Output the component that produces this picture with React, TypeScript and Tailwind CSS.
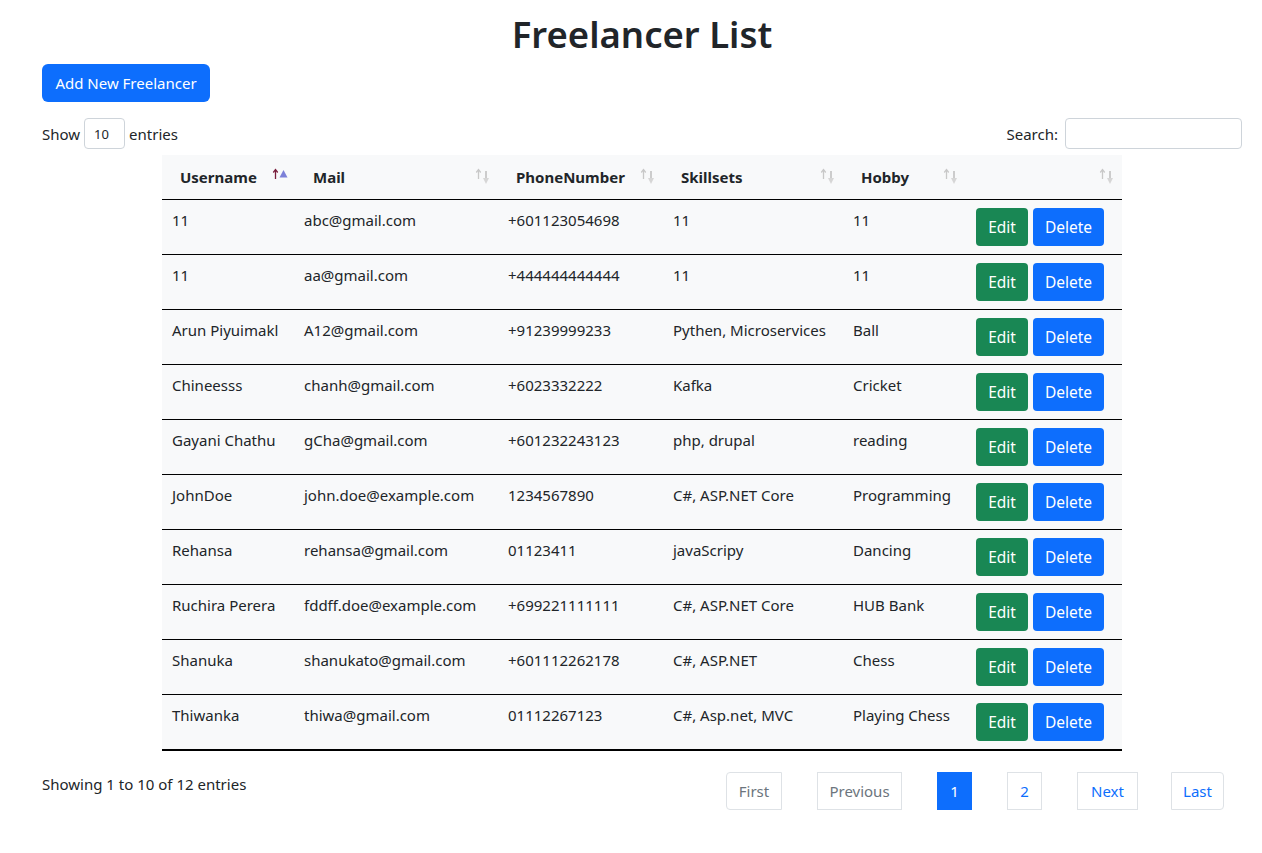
import React from 'react'

type Freelancer = {
  username: string
  mail: string
  phone: string
  skills: string
  hobby: string
}

const rows: Freelancer[] = [
  { username: '11', mail: 'abc@gmail.com', phone: '+601123054698', skills: '11', hobby: '11' },
  { username: '11', mail: 'aa@gmail.com', phone: '+444444444444', skills: '11', hobby: '11' },
  { username: 'Arun Piyuimakl', mail: 'A12@gmail.com', phone: '+91239999233', skills: 'Pythen, Microservices', hobby: 'Ball' },
  { username: 'Chineesss', mail: 'chanh@gmail.com', phone: '+6023332222', skills: 'Kafka', hobby: 'Cricket' },
  { username: 'Gayani Chathu', mail: 'gCha@gmail.com', phone: '+601232243123', skills: 'php, drupal', hobby: 'reading' },
  { username: 'JohnDoe', mail: 'john.doe@example.com', phone: '1234567890', skills: 'C#, ASP.NET Core', hobby: 'Programming' },
  { username: 'Rehansa', mail: 'rehansa@gmail.com', phone: '01123411', skills: 'javaScripy', hobby: 'Dancing' },
  { username: 'Ruchira Perera', mail: 'fddff.doe@example.com', phone: '+699221111111', skills: 'C#, ASP.NET Core', hobby: 'HUB Bank' },
  { username: 'Shanuka', mail: 'shanukato@gmail.com', phone: '+601112262178', skills: 'C#, ASP.NET', hobby: 'Chess' },
  { username: 'Thiwanka', mail: 'thiwa@gmail.com', phone: '01112267123', skills: 'C#, Asp.net, MVC', hobby: 'Playing Chess' },
]

const columns = [
  { label: 'Username', width: 'w-[133px]' },
  { label: 'Mail', width: 'w-[203px]' },
  { label: 'PhoneNumber', width: 'w-[165px]' },
  { label: 'Skillsets', width: 'w-[180px]' },
  { label: 'Hobby', width: 'w-[123px]' },
  { label: '', width: 'w-[156px]' },
]

function SortIcon({ active }: { active?: boolean }) {
  const up = active ? '#7a1f3d' : '#c8c8c8'
  return (
    <svg width="18" height="20" viewBox="0 0 18 20" className="absolute right-[6px] top-1/2 -translate-y-1/2">
      {/* small up arrow */}
      <line x1="4.5" y1="3" x2="4.5" y2="12" stroke={up} strokeWidth="1.3" />
      <path d="M2.3 5.5 L4.5 2.5 L6.7 5.5" fill="none" stroke={up} strokeWidth="1.3" />
      {active ? (
        <path d="M8.5 10.5 L12.5 3 L16.5 10.5 Z" fill="#7c80d8" />
      ) : (
        <>
          <line x1="12" y1="4" x2="12" y2="15" stroke="#b4b4b4" strokeWidth="1.3" />
          <path d="M9 11 L12 17 L15 11 Z" fill="#d6d6d6" />
        </>
      )}
    </svg>
  )
}

function PageButton({ label, width, kind, rounded }: { label: string; width: string; kind: 'disabled' | 'active' | 'link'; rounded?: 'l' | 'r' }) {
  const color =
    kind === 'active'
      ? 'bg-[#0d6efd] border-[#0d6efd] text-white'
      : kind === 'disabled'
        ? 'bg-white border-[#dee2e6] text-[#6c757d]'
        : 'bg-white border-[#dee2e6] text-[#0d6efd]'
  const corner = rounded === 'l' ? 'rounded-l-[4px]' : rounded === 'r' ? 'rounded-r-[4px] ml-[-2px]' : ''
  return (
    <div className={`flex h-[38px] items-center justify-center border ${width} ${color} ${corner}`}>{label}</div>
  )
}

export default function App() {
  return (
    <div className="min-h-screen bg-white pl-[42px] pr-[20px] text-[15px] leading-[24px] text-[#212529]" style={{ fontFamily: '"Noto Sans", sans-serif' }}>
      <h1 className="pt-[10px] text-center text-[36.5px] font-semibold leading-[48px] text-[#212529]">Freelancer List</h1>

      <button className="mt-[6px] h-[38px] w-[168px] rounded-[6px] bg-[#0d6efd] text-white">Add New Freelancer</button>

      <div className="mt-[16px] flex items-center justify-between">
        <div className="flex items-center">
          <span>Show</span>
          <div className="mx-[4px] flex h-[31px] w-[41px] items-center rounded-[4px] border border-[#ced4da] pl-[9px] text-[13px]">10</div>
          <span>entries</span>
        </div>
        <div className="flex items-center">
          <span className="mr-[7px]">Search:</span>
          <div className="h-[31px] w-[177px] rounded-[4px] border border-[#ced4da] bg-white" />
        </div>
      </div>

      <table className="mx-auto mt-[6px] w-[960px] table-fixed border-collapse bg-[#f8f9fa]">
        <colgroup>
          {columns.map((c, i) => (
            <col key={i} className={c.width} />
          ))}
        </colgroup>
        <thead>
          <tr className="h-[44px] border-b border-black">
            {columns.map((c, i) => (
              <th key={i} className="relative pl-[18px] text-left font-bold whitespace-nowrap">
                {c.label}
                <SortIcon active={i === 0} />
              </th>
            ))}
          </tr>
        </thead>
        <tbody>
          {rows.map((r, i) => (
            <tr key={i} className={`h-[55px] ${i === rows.length - 1 ? 'border-b-2' : 'border-b'} border-black`}>
              <td className="px-[10px] pt-[8px] align-top whitespace-nowrap">{r.username}</td>
              <td className="px-[9px] pt-[8px] align-top whitespace-nowrap">{r.mail}</td>
              <td className="px-[10px] pt-[8px] align-top whitespace-nowrap">{r.phone}</td>
              <td className="px-[10px] pt-[8px] align-top whitespace-nowrap">{r.skills}</td>
              <td className="px-[10px] pt-[8px] align-top whitespace-nowrap">{r.hobby}</td>
              <td className="px-[10px] py-[8px] align-top">
                <div className="flex gap-[5px]">
                  <button className="flex h-[38px] w-[52px] items-center justify-center rounded-[4px] bg-[#198754] text-[15.5px] text-white">Edit</button>
                  <button className="flex h-[38px] w-[71px] items-center justify-center rounded-[4px] bg-[#0d6efd] text-[15.5px] text-white">Delete</button>
                </div>
              </td>
            </tr>
          ))}
        </tbody>
      </table>

      <div className="mt-[21px] flex items-start justify-between">
        <div>Showing 1 to 10 of 12 entries</div>
        <div className="mr-[18px] flex gap-[35px]">
          <PageButton label="First" width="w-[56px]" kind="disabled" rounded="l" />
          <PageButton label="Previous" width="w-[85px]" kind="disabled" />
          <PageButton label="1" width="w-[35px]" kind="active" />
          <PageButton label="2" width="w-[35px]" kind="link" />
          <PageButton label="Next" width="w-[61px]" kind="link" />
          <PageButton label="Last" width="w-[53px]" kind="link" rounded="r" />
        </div>
      </div>
    </div>
  )
}
